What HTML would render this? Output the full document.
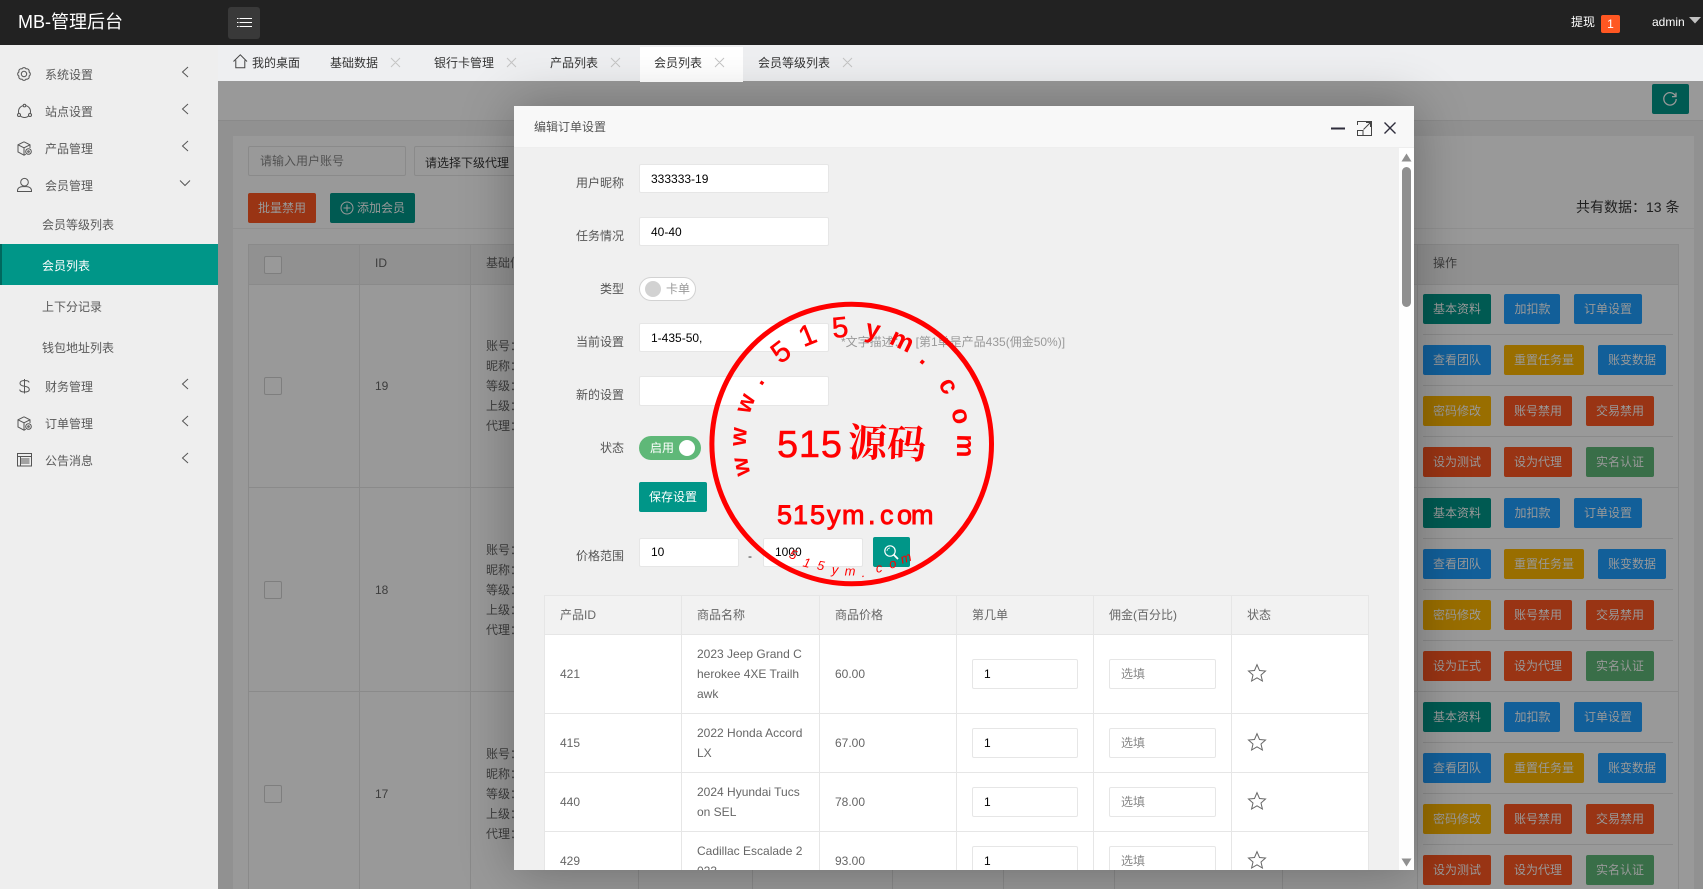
<!DOCTYPE html>
<html lang="zh"><head><meta charset="utf-8"><title>MB-管理后台</title>
<style>
*{box-sizing:border-box;margin:0;padding:0}
html,body{width:1703px;height:889px;overflow:hidden;background:#919191}
body{font:12px/20px "Liberation Sans","Noto Sans CJK SC",sans-serif;color:#666;position:relative}
.t,.b,.r,.i,.d,svg.s{position:absolute}
.t{white-space:nowrap;line-height:20px}
.d{white-space:nowrap;line-height:20px;color:#3d3d3d}
.b{height:30px;line-height:30px;color:#999;text-align:center;border-radius:2px;white-space:nowrap}
.g{background:#005a52}.bl{background:#125f99}.o{background:#996e00}.rd{background:#993414}.gn{background:#396e48}
.w68{width:68px}.w56{width:56px;padding-left:1px}.w80{width:80px}
.i{background:#fff;border:1px solid #e6e6e6;border-radius:2px;padding-left:11px;line-height:29px;color:#000;white-space:nowrap}
.l{width:60px;text-align:right;color:#555;left:564px}
.m{color:#595959}
.ln{position:absolute;background:#e6e6e6}
.dl{position:absolute;background:#8a8a8a}
.tab{color:#333}
svg.s{overflow:visible;fill:none}
.red text{fill:#f00}
</style></head><body>

<!-- dimmed background page -->
<div class="r" style="left:218px;top:81px;width:1485px;height:808px;background:#919191"></div>
<div class="r" style="left:218px;top:81px;width:1485px;height:40px;background:#999;border-bottom:1px solid #8a8a8a"></div>
<div class="b g" style="left:1652px;top:84px;width:37px"></div>
<svg class="s" style="left:1662px;top:91px" width="16" height="16" viewBox="0 0 16 16"><path d="M13.6 5.2A6.2 6.2 0 1 0 14.2 8" stroke="#999" stroke-width="1.3"/><path d="M14 1.6V5.6H10" stroke="#999" stroke-width="1.3"/></svg>
<div class="r" style="left:233px;top:136px;width:1461px;height:753px;background:#999"></div>
<div class="r" style="left:248px;top:146px;width:158px;height:30px;background:#999;border:1px solid #8a8a8a;border-radius:2px"></div>
<div class="d" style="left:260px;top:151px;color:#525252">请输入用户账号</div>
<div class="r" style="left:414px;top:146px;width:150px;height:30px;background:#999;border:1px solid #8a8a8a;border-radius:2px"></div>
<div class="d" style="left:425px;top:153px;color:#1f1f1f">请选择下级代理</div>
<div class="b rd w68" style="left:248px;top:193px">批量禁用</div>
<div class="b g" style="left:330px;top:193px;width:85px;padding-left:17px">添加会员</div>
<svg class="s" style="left:340px;top:201px" width="14" height="14" viewBox="0 0 14 14"><circle cx="7" cy="7" r="6" stroke="#999"/><path d="M7 3.5v7M3.5 7h7" stroke="#999"/></svg>
<div class="r" style="left:233px;top:228px;width:1461px;height:1px;background:#909090"></div>
<div class="d" style="left:1576px;top:197px;font-size:14px;color:#1f1f1f">共有数据：13 条</div>

<div class="r" style="left:248px;top:244px;width:1431px;height:40px;background:#919191"></div>
<div class="dl" style="left:248px;top:244px;width:1431px;height:1px"></div>
<div class="dl" style="left:248px;top:284px;width:1431px;height:1px"></div>
<div class="dl" style="left:248px;top:487px;width:1431px;height:1px"></div>
<div class="dl" style="left:248px;top:691px;width:1431px;height:1px"></div>
<div class="dl" style="left:248px;top:244px;width:1px;height:645px"></div>
<div class="dl" style="left:359px;top:244px;width:1px;height:645px"></div>
<div class="dl" style="left:470px;top:244px;width:1px;height:645px"></div>
<div class="dl" style="left:638px;top:692px;width:1px;height:197px"></div>
<div class="dl" style="left:752px;top:692px;width:1px;height:197px"></div>
<div class="dl" style="left:892px;top:692px;width:1px;height:197px"></div>
<div class="dl" style="left:1003px;top:692px;width:1px;height:197px"></div>
<div class="dl" style="left:1114px;top:692px;width:1px;height:197px"></div>
<div class="dl" style="left:1282px;top:692px;width:1px;height:197px"></div>
<div class="dl" style="left:1417px;top:244px;width:1px;height:645px"></div>
<div class="dl" style="left:1678px;top:244px;width:1px;height:645px"></div>

<div class="r" style="left:264px;top:256px;width:18px;height:18px;border:1px solid #7e7e7e;border-radius:2px;background:#999"></div>
<div class="d" style="left:375px;top:253px">ID</div><div class="d" style="left:486px;top:253px">基础信息</div><div class="d" style="left:1433px;top:253px">操作</div>

<div class="r" style="left:264px;top:377px;width:18px;height:18px;border:1px solid #7e7e7e;border-radius:2px;background:#999"></div>
<div class="r" style="left:264px;top:581px;width:18px;height:18px;border:1px solid #7e7e7e;border-radius:2px;background:#999"></div>
<div class="r" style="left:264px;top:785px;width:18px;height:18px;border:1px solid #7e7e7e;border-radius:2px;background:#999"></div>
<div class="d" style="left:375px;top:376px">19</div><div class="d" style="left:375px;top:580px">18</div><div class="d" style="left:375px;top:784px">17</div>

<div class="d" style="left:486px;top:336px">账号：<br>昵称：<br>等级：<br>上级：<br>代理：</div>
<div class="d" style="left:486px;top:540px">账号：<br>昵称：<br>等级：<br>上级：<br>代理：</div>
<div class="d" style="left:486px;top:744px">账号：<br>昵称：<br>等级：<br>上级：<br>代理：</div>

<!-- operation rows -->
<div class="dl" style="left:1423px;top:334px;width:250px;height:1px"></div>
<div class="dl" style="left:1423px;top:385px;width:250px;height:1px"></div>
<div class="dl" style="left:1423px;top:436px;width:250px;height:1px"></div>
<div class="dl" style="left:1423px;top:538px;width:250px;height:1px"></div>
<div class="dl" style="left:1423px;top:589px;width:250px;height:1px"></div>
<div class="dl" style="left:1423px;top:640px;width:250px;height:1px"></div>
<div class="dl" style="left:1423px;top:742px;width:250px;height:1px"></div>
<div class="dl" style="left:1423px;top:793px;width:250px;height:1px"></div>
<div class="dl" style="left:1423px;top:844px;width:250px;height:1px"></div>

<div class="b g w68" style="left:1423px;top:294px">基本资料</div><div class="b bl w56" style="left:1504px;top:294px">加扣款</div><div class="b bl w68" style="left:1574px;top:294px">订单设置</div>
<div class="b bl w68" style="left:1423px;top:345px">查看团队</div><div class="b o w80" style="left:1504px;top:345px">重置任务量</div><div class="b bl w68" style="left:1598px;top:345px">账变数据</div>
<div class="b o w68" style="left:1423px;top:396px">密码修改</div><div class="b rd w68" style="left:1504px;top:396px">账号禁用</div><div class="b rd w68" style="left:1586px;top:396px">交易禁用</div>
<div class="b rd w68" style="left:1423px;top:447px">设为测试</div><div class="b rd w68" style="left:1504px;top:447px">设为代理</div><div class="b gn w68" style="left:1586px;top:447px">实名认证</div>

<div class="b g w68" style="left:1423px;top:498px">基本资料</div><div class="b bl w56" style="left:1504px;top:498px">加扣款</div><div class="b bl w68" style="left:1574px;top:498px">订单设置</div>
<div class="b bl w68" style="left:1423px;top:549px">查看团队</div><div class="b o w80" style="left:1504px;top:549px">重置任务量</div><div class="b bl w68" style="left:1598px;top:549px">账变数据</div>
<div class="b o w68" style="left:1423px;top:600px">密码修改</div><div class="b rd w68" style="left:1504px;top:600px">账号禁用</div><div class="b rd w68" style="left:1586px;top:600px">交易禁用</div>
<div class="b rd w68" style="left:1423px;top:651px">设为正式</div><div class="b rd w68" style="left:1504px;top:651px">设为代理</div><div class="b gn w68" style="left:1586px;top:651px">实名认证</div>

<div class="b g w68" style="left:1423px;top:702px">基本资料</div><div class="b bl w56" style="left:1504px;top:702px">加扣款</div><div class="b bl w68" style="left:1574px;top:702px">订单设置</div>
<div class="b bl w68" style="left:1423px;top:753px">查看团队</div><div class="b o w80" style="left:1504px;top:753px">重置任务量</div><div class="b bl w68" style="left:1598px;top:753px">账变数据</div>
<div class="b o w68" style="left:1423px;top:804px">密码修改</div><div class="b rd w68" style="left:1504px;top:804px">账号禁用</div><div class="b rd w68" style="left:1586px;top:804px">交易禁用</div>
<div class="b rd w68" style="left:1423px;top:855px">设为测试</div><div class="b rd w68" style="left:1504px;top:855px">设为代理</div><div class="b gn w68" style="left:1586px;top:855px">实名认证</div>

<!-- tabs -->
<div class="r" style="left:218px;top:45px;width:1485px;height:36px;background:#eeeff1"></div>
<div class="r" style="left:640px;top:47px;width:103px;height:35px;background:#fff"></div>
<svg class="s" style="left:233px;top:54px" width="15" height="15" viewBox="0 0 15 15"><path d="M0.5 7.5L7.3 0.8L14 7.5M2.8 6.2V13.8H11.8V6.2" stroke="#444"/></svg>
<div class="t tab" style="left:252px;top:53px">我的桌面</div>
<div class="t tab" style="left:330px;top:53px">基础数据</div>
<div class="t tab" style="left:434px;top:53px">银行卡管理</div>
<div class="t tab" style="left:550px;top:53px">产品列表</div>
<div class="t tab" style="left:654px;top:53px">会员列表</div>
<div class="t tab" style="left:758px;top:53px">会员等级列表</div>
<svg class="s" style="left:0;top:0" width="1703" height="81"><path d="M391 58l9 9m0-9l-9 9M507 58l9 9m0-9l-9 9M611 58l9 9m0-9l-9 9M715 58l9 9m0-9l-9 9M843 58l9 9m0-9l-9 9" stroke="#c4c4c4"/></svg>

<!-- header -->
<div class="r" style="left:0;top:0;width:1703px;height:45px;background:#222"></div>
<div class="t" style="left:18px;top:12px;font-size:18px;color:#fff">MB-管理后台</div>
<div class="r" style="left:228px;top:7px;width:32px;height:32px;background:#393939;border-radius:3px"></div>
<svg class="s" style="left:237px;top:18px" width="15" height="10" viewBox="0 0 15 10"><path d="M2.500 .5H15M2.500 4.500H15M2.500 8.500H15M0 .5H1.500M0 4.500H1.500M0 8.500H1.500" stroke="#fff"/></svg>
<div class="t" style="left:1571px;top:12px;color:#fff">提现</div>
<div class="r" style="left:1601px;top:15px;width:19px;height:18px;background:#ff5722;border-radius:2px;color:#fff;text-align:center;line-height:18px">1</div>
<div class="t" style="left:1652px;top:12px;color:#fff">admin</div>
<svg class="s" style="left:1689px;top:17px" width="12" height="7"><path d="M0 0H12L6 6.5Z" fill="#c2c2c2"/></svg>

<!-- sidebar -->
<div class="r" style="left:0;top:45px;width:218px;height:844px;background:#eee"></div>
<div class="r" style="left:0;top:244px;width:218px;height:41px;background:#009688;border-left:2px solid #00685e"></div>
<div class="t m" style="left:45px;top:65px">系统设置</div>
<div class="t m" style="left:45px;top:102px">站点设置</div>
<div class="t m" style="left:45px;top:139px">产品管理</div>
<div class="t m" style="left:45px;top:176px">会员管理</div>
<div class="t m" style="left:42px;top:215px">会员等级列表</div>
<div class="t" style="left:42px;top:256px;color:#fff">会员列表</div>
<div class="t m" style="left:42px;top:297px">上下分记录</div>
<div class="t m" style="left:42px;top:338px">钱包地址列表</div>
<div class="t m" style="left:45px;top:377px">财务管理</div>
<div class="t m" style="left:45px;top:414px">订单管理</div>
<div class="t m" style="left:45px;top:451px">公告消息</div>
<svg class="s" style="left:0;top:0" width="218" height="500" stroke="#555">
<path d="M188 67L182.500 72L188 77M188 104L182.500 109L188 114M188 141L182.500 146L188 151M188 379L182.500 384L188 389M188 416L182.500 421L188 426M188 453L182.500 458L188 463M180 180.500L185 185.500L190 180.500"/>
<g transform="translate(24 74)"><path d="M5.080-2.100A2.400 2.400 0 0 1 5.080 2.100A2.400 2.400 0 0 1 2.100 5.080A2.400 2.400 0 0 1-2.100 5.080A2.400 2.400 0 0 1-5.080 2.100A2.400 2.400 0 0 1-5.080-2.100A2.400 2.400 0 0 1-2.100-5.080A2.400 2.400 0 0 1 2.100-5.080A2.400 2.400 0 0 1 5.080-2.100Z"/><circle r="2.700"/></g>
<g transform="translate(17 104)"><circle cx="7.500" cy="7.500" r="6"/><circle cx="7.500" cy="1.600" r="1.300" fill="#eee"/><circle cx="2" cy="11" r="1.500" fill="#eee"/><circle cx="13" cy="11" r="1.500" fill="#eee"/></g>
<g transform="translate(17 141)"><path d="M7 .8L13 3.800V7M7 .8L1 3.800V11L7 14.200L8.800 13.300M1 3.800L7 6.800L13 3.800M7 6.800V14"/><circle cx="11.500" cy="10.500" r="2.800"/><circle cx="11.500" cy="10.500" r=".8"/></g>
<g transform="translate(17 178)"><circle cx="7.500" cy="4.200" r="3.800"/><path d="M.5 13.500V12.500C.5 10 3 8.600 5.500 8.600H9.500C12 8.600 14.500 10 14.500 12.500V13.500Z"/></g>
<g transform="translate(19 379)"><path d="M10 3.500C10 1.800 8 1.500 5.500 1.500 3 1.500 1 2.500 1 4.300 1 6.300 3 7 5.500 7.300 8 7.600 10.300 8.300 10.300 10.500 10.300 12.500 8 13 5.500 13 3 13 .8 12.500.8 10.500M5.500 0V14.500"/></g>
<g transform="translate(17 416)"><path d="M7 .8L13 3.800V7M7 .8L1 3.800V11L7 14.200L8.800 13.300M1 3.800L7 6.800L13 3.800M7 6.800V14"/><circle cx="11.500" cy="10.500" r="2.800"/><circle cx="11.500" cy="10.500" r=".8"/></g>
<g transform="translate(17 453)"><rect x=".5" y=".5" width="14" height="12.500"/><path d="M.5 3.500H14.500M3.500 6H12.500M3.500 8H12.500M3.500 10H12.500M3.500 3.500V13"/></g>
</svg>

<!-- modal -->
<div class="r" style="left:514px;top:106px;width:900px;height:764px;box-shadow:1px 1px 50px rgba(0,0,0,.3)"></div>
<div class="r" style="left:0;top:0;width:1703px;height:889px;clip-path:inset(106px 289px 19px 514px)">
<div class="r" style="left:514px;top:106px;width:900px;height:764px;background:#f0f0f0"></div>
<div class="r" style="left:514px;top:106px;width:900px;height:42px;background:#f8f8f8;border-bottom:1px solid #eee"></div>
<div class="t" style="left:534px;top:117px;color:#555">编辑订单设置</div>
<svg class="s" style="left:0;top:0" width="1703" height="200" stroke="#2e2d3c"><path d="M1331 128.500H1345" stroke-width="2"/><path d="M1357.500 125V121.500H1371.500V135.500H1363M1357.500 130.500H1363V135.500H1357.500ZM1363.500 129.500L1370.500 122.500M1366 122.500H1370.500V127" stroke="#444" fill="none"/><path d="M1384.500 122.500L1395.500 133.500M1395.500 122.500L1384.500 133.500" stroke-width="1.400"/></svg>

<div class="r" style="left:1399px;top:148px;width:15px;height:722px;background:#fefefe"></div>
<div class="r" style="left:1402px;top:167px;width:9px;height:140px;background:#909090;border-radius:5px"></div>
<svg class="s" style="left:0;top:0" width="1703" height="889"><path d="M1401.500 161.500H1411.500L1406.500 153.500Z M1401.500 858.500H1411.500L1406.500 866.500Z" fill="#909090"/></svg>

<div class="t l" style="top:173px">用户昵称</div><div class="i" style="left:639px;top:164px;width:190px;height:29px">333333-19</div>
<div class="t l" style="top:226px">任务情况</div><div class="i" style="left:639px;top:217px;width:190px;height:29px">40-40</div>
<div class="t l" style="top:279px">类型</div>
<div class="r" style="left:639px;top:277px;width:57px;height:24px;background:#fff;border:1px solid #d2d2d2;border-radius:12px"></div>
<div class="r" style="left:645px;top:281px;width:16px;height:16px;background:#d2d2d2;border-radius:50%"></div>
<div class="t" style="left:666px;top:279px;color:#999">卡单</div>
<div class="t l" style="top:332px">当前设置</div><div class="i" style="left:639px;top:323px;width:190px;height:29px">1-435-50,</div>
<div class="t" style="left:841px;top:332px;color:#999">*文字描述：&nbsp;&nbsp;&nbsp;[第1单是产品435(佣金50%)]</div>
<div class="t l" style="top:385px">新的设置</div><div class="i" style="left:639px;top:376px;width:190px;height:30px"></div>
<div class="t l" style="top:438px">状态</div>
<div class="r" style="left:639px;top:436px;width:62px;height:24px;background:#5fb878;border-radius:12px"></div>
<div class="t" style="left:650px;top:438px;color:#fff">启用</div>
<div class="r" style="left:679px;top:440px;width:16px;height:16px;background:#fff;border-radius:50%"></div>
<div class="b" style="left:639px;top:482px;width:68px;background:#009688;color:#fff">保存设置</div>
<div class="t l" style="top:546px">价格范围</div>
<div class="i" style="left:639px;top:538px;width:100px;height:29px;line-height:27px">10</div>
<div class="t" style="left:748px;top:546px;color:#333">-</div>
<div class="i" style="left:763px;top:538px;width:100px;height:29px;line-height:27px">1000</div>
<div class="b" style="left:873px;top:537px;width:37px;background:#009688"></div>
<svg class="s" style="left:884px;top:545px" width="15" height="15"><circle cx="6" cy="6" r="5.200" stroke="#fff" stroke-width="1.200"/><path d="M9.800 9.800L14 14" stroke="#fff" stroke-width="1.800"/><path d="M3 6A3 3 0 0 1 6 3" stroke="#fff" stroke-width=".8"/></svg>

<!-- order table -->
<div class="r" style="left:544px;top:595px;width:825px;height:300px;background:#fff"></div>
<div class="r" style="left:544px;top:595px;width:825px;height:39px;background:#f2f2f2"></div>
<div class="ln" style="left:544px;top:595px;width:825px;height:1px"></div>
<div class="ln" style="left:544px;top:634px;width:825px;height:1px"></div>
<div class="ln" style="left:544px;top:713px;width:825px;height:1px"></div>
<div class="ln" style="left:544px;top:772px;width:825px;height:1px"></div>
<div class="ln" style="left:544px;top:831px;width:825px;height:1px"></div>
<div class="ln" style="left:544px;top:595px;width:1px;height:290px"></div>
<div class="ln" style="left:681px;top:595px;width:1px;height:290px"></div>
<div class="ln" style="left:819px;top:595px;width:1px;height:290px"></div>
<div class="ln" style="left:956px;top:595px;width:1px;height:290px"></div>
<div class="ln" style="left:1093px;top:595px;width:1px;height:290px"></div>
<div class="ln" style="left:1231px;top:595px;width:1px;height:290px"></div>
<div class="ln" style="left:1368px;top:595px;width:1px;height:290px"></div>
<div class="t" style="left:560px;top:605px">产品ID</div><div class="t" style="left:697px;top:605px">商品名称</div><div class="t" style="left:835px;top:605px">商品价格</div><div class="t" style="left:972px;top:605px">第几单</div><div class="t" style="left:1109px;top:605px">佣金(百分比)</div><div class="t" style="left:1247px;top:605px">状态</div>

<div class="t" style="left:560px;top:664px">421</div><div class="t" style="left:697px;top:644px">2023 Jeep Grand C<br>herokee 4XE Trailh<br>awk</div><div class="t" style="left:835px;top:664px">60.00</div>
<div class="t" style="left:560px;top:733px">415</div><div class="t" style="left:697px;top:723px">2022 Honda Accord<br>LX</div><div class="t" style="left:835px;top:733px">67.00</div>
<div class="t" style="left:560px;top:792px">440</div><div class="t" style="left:697px;top:782px">2024 Hyundai Tucs<br>on SEL</div><div class="t" style="left:835px;top:792px">78.00</div>
<div class="t" style="left:560px;top:851px">429</div><div class="t" style="left:697px;top:841px">Cadillac Escalade 2<br>023</div><div class="t" style="left:835px;top:851px">93.00</div>

<div class="i" style="left:972px;top:659px;width:106px;height:30px">1</div><div class="i" style="left:1109px;top:659px;width:107px;height:30px;color:#888">选填</div>
<div class="i" style="left:972px;top:728px;width:106px;height:30px">1</div><div class="i" style="left:1109px;top:728px;width:107px;height:30px;color:#888">选填</div>
<div class="i" style="left:972px;top:787px;width:106px;height:30px">1</div><div class="i" style="left:1109px;top:787px;width:107px;height:30px;color:#888">选填</div>
<div class="i" style="left:972px;top:846px;width:106px;height:30px">1</div><div class="i" style="left:1109px;top:846px;width:107px;height:30px;color:#888">选填</div>
<svg class="s" style="left:1248px;top:664px" width="18" height="18"><path d="M9 .7L11.500 6.500L17.500 7L13 11L14.400 17L9 13.800L3.600 17L5 11L.5 7L6.500 6.500Z" stroke="#666"/></svg>
<svg class="s" style="left:1248px;top:733px" width="18" height="18"><path d="M9 .7L11.500 6.500L17.500 7L13 11L14.400 17L9 13.800L3.600 17L5 11L.5 7L6.500 6.500Z" stroke="#666"/></svg>
<svg class="s" style="left:1248px;top:792px" width="18" height="18"><path d="M9 .7L11.500 6.500L17.500 7L13 11L14.400 17L9 13.800L3.600 17L5 11L.5 7L6.500 6.500Z" stroke="#666"/></svg>
<svg class="s" style="left:1248px;top:851px" width="18" height="18"><path d="M9 .7L11.500 6.500L17.500 7L13 11L14.400 17L9 13.800L3.600 17L5 11L.5 7L6.500 6.500Z" stroke="#666"/></svg>
</div>

<!-- stamp -->
<svg class="s red" style="left:0;top:0;font-family:'Liberation Sans',sans-serif" width="1703" height="889">
<circle cx="851.700" cy="444" r="139.800" stroke="#f00" stroke-width="5"/>
<text x="777" y="457" font-size="38" textLength="65" lengthAdjust="spacing" stroke="#f00" stroke-width=".5">515</text>
<text x="848" y="457" font-size="39" font-weight="700" style="font-family:'Noto Serif CJK SC',serif" transform="rotate(2 885 445)">源码</text>
<text font-size="27" y="524" x="777 793 810 827 842 868 868 880 897 911" stroke="#f00" stroke-width=".9">515ym. com</text>
<g font-size="24" font-weight="bold" text-anchor="middle">
<text transform="translate(740.700 466.700) rotate(-101.500)" y="8">w</text>
<text transform="translate(738.300 436.700) rotate(-86.300)" y="8">w</text>
<text transform="translate(745 403.300) rotate(-69.100)" y="8">w</text>
<text transform="translate(761.700 382.700) rotate(-55.700)" y="2">.</text>
</g>
<g font-size="29" text-anchor="middle" stroke="#f00" stroke-width=".5">
<text transform="translate(780.700 351.700) rotate(-37.600)" y="10">5</text>
<text transform="translate(807.300 335) rotate(-22.100)" y="10">1</text>
<text transform="translate(840 327.300) rotate(-5.700)" y="10">5</text>
</g>
<g font-size="26" font-weight="bold" text-anchor="middle">
<text transform="translate(873 330) rotate(12)" y="8">y</text>
<text transform="translate(902 341) rotate(26.300)" y="8">m</text>
<text transform="translate(922.300 362) rotate(40.800)" y="2">.</text>
<text transform="translate(948.300 386) rotate(59)" y="8">c</text>
<text transform="translate(960.700 416) rotate(75.600)" y="8">o</text>
<text transform="translate(965 446) rotate(91)" y="8">m</text>
</g>
<g font-size="13" font-style="italic" text-anchor="middle">
<text transform="translate(793 555) rotate(20)" y="4">5</text>
<text transform="translate(806.700 563.300) rotate(14)" y="4">1</text>
<text transform="translate(820.700 566) rotate(10)" y="4">5</text>
<text transform="translate(835 570) rotate(5)" y="4">y</text>
<text transform="translate(850 571.700)" y="4">m</text>
<text transform="translate(863.300 573) rotate(-3)" y="4">.</text>
<text transform="translate(879 568.300) rotate(-8)" y="4">c</text>
<text transform="translate(892.700 564) rotate(-14)" y="4">o</text>
<text transform="translate(906 558.300) rotate(-20)" y="4">m</text>
</g>
</svg>
</body></html>
